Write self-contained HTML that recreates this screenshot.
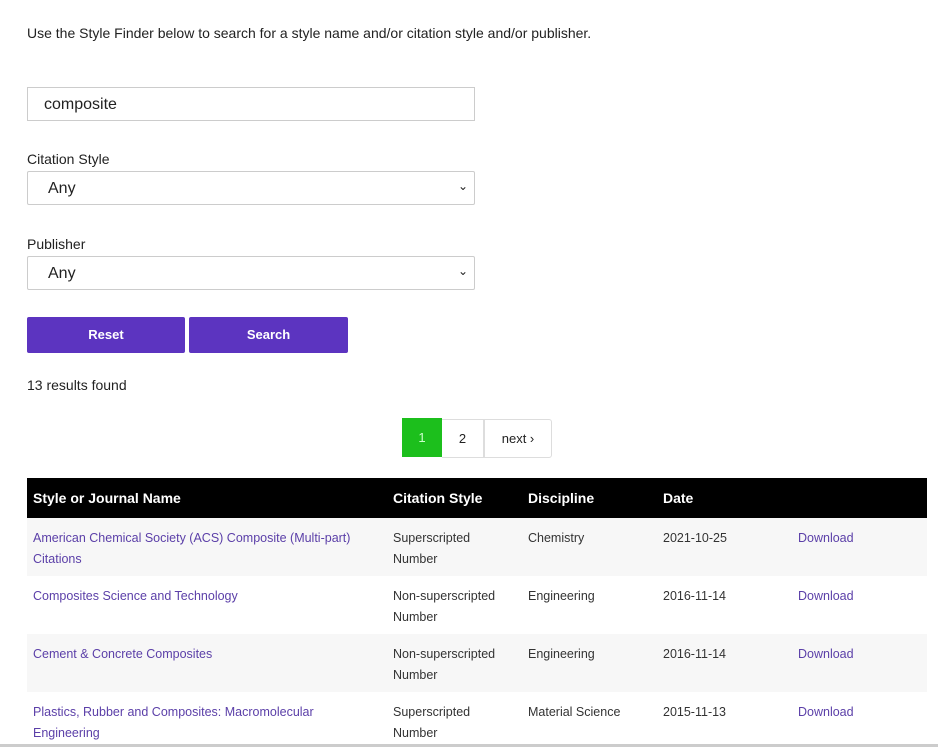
<!DOCTYPE html>
<html><head><style>
body{margin:0;width:938px;height:747px;overflow:hidden;background:#fff;font-family:"Liberation Sans",sans-serif;color:#222;position:relative}
.a{position:absolute}
.inp{position:absolute;left:27px;width:448px;height:34px;border:1px solid #ccc;background:#fff;font-size:16px;box-sizing:border-box}
.btn{position:absolute;top:317px;height:36px;background:#5c34c0;color:#fff;font-weight:bold;font-size:13px;text-align:center;line-height:36px;border-radius:2px}
table{position:absolute;left:27px;top:478px;width:900px;border-collapse:collapse;font-size:12.5px}
th{background:#000;color:#fff;text-align:left;height:40px;padding:0 6px;font-size:14px}
td{vertical-align:top;padding:10px 6px 0;height:48px;line-height:21px;color:#333}
tr.g td{background:#f7f7f7}
td a{color:#5b3fa8;text-decoration:none}
</style></head><body>
<div class="a" style="left:27px;top:25px;font-size:14px">Use the Style Finder below to search for a style name and/or citation style and/or publisher.</div>
<div class="inp" style="top:87px;padding:8px 16px">composite</div>
<div class="a" style="left:27px;top:151px;font-size:14px">Citation Style</div>
<div class="inp" style="top:171px;padding:8px 20px;border-radius:2px">Any<span style="position:absolute;right:6px;top:7px;font-size:12px">&#8964;</span></div>
<div class="a" style="left:27px;top:236px;font-size:14px">Publisher</div>
<div class="inp" style="top:256px;padding:8px 20px;border-radius:2px">Any<span style="position:absolute;right:6px;top:7px;font-size:12px">&#8964;</span></div>
<div class="btn" style="left:27px;width:158px">Reset</div>
<div class="btn" style="left:189px;width:159px">Search</div>
<div class="a" style="left:27px;top:377px;font-size:14px">13 results found</div>
<div class="a" style="left:402px;top:418px;width:40px;height:39px;background:#1cbf1c;color:#cfc;font-size:13px;text-align:center;line-height:39px">1</div>
<div class="a" style="left:442px;top:419px;width:41px;height:37px;border:1px solid #ddd;border-left:none;font-size:13px;text-align:center;line-height:37px">2</div>
<div class="a" style="left:484px;top:419px;width:66px;height:37px;border:1px solid #ddd;border-radius:0 3px 3px 0;font-size:13px;text-align:center;line-height:37px">next ›</div>
<table>
<tr><th style="width:348px">Style or Journal Name</th><th style="width:123px">Citation Style</th><th style="width:123px">Discipline</th><th style="width:123px">Date</th><th></th></tr>
<tr class="g"><td><a>American Chemical Society (ACS) Composite (Multi-part) Citations</a></td><td>Superscripted Number</td><td>Chemistry</td><td>2021-10-25</td><td><a>Download</a></td></tr>
<tr><td><a>Composites Science and Technology</a></td><td>Non-superscripted Number</td><td>Engineering</td><td>2016-11-14</td><td><a>Download</a></td></tr>
<tr class="g"><td><a>Cement &amp; Concrete Composites</a></td><td>Non-superscripted Number</td><td>Engineering</td><td>2016-11-14</td><td><a>Download</a></td></tr>
<tr><td><a>Plastics, Rubber and Composites: Macromolecular Engineering</a></td><td>Superscripted Number</td><td>Material Science</td><td>2015-11-13</td><td><a>Download</a></td></tr>
</table>
<div class="a" style="left:0;top:744px;width:938px;height:3px;background:#ccc"></div>
</body></html>
